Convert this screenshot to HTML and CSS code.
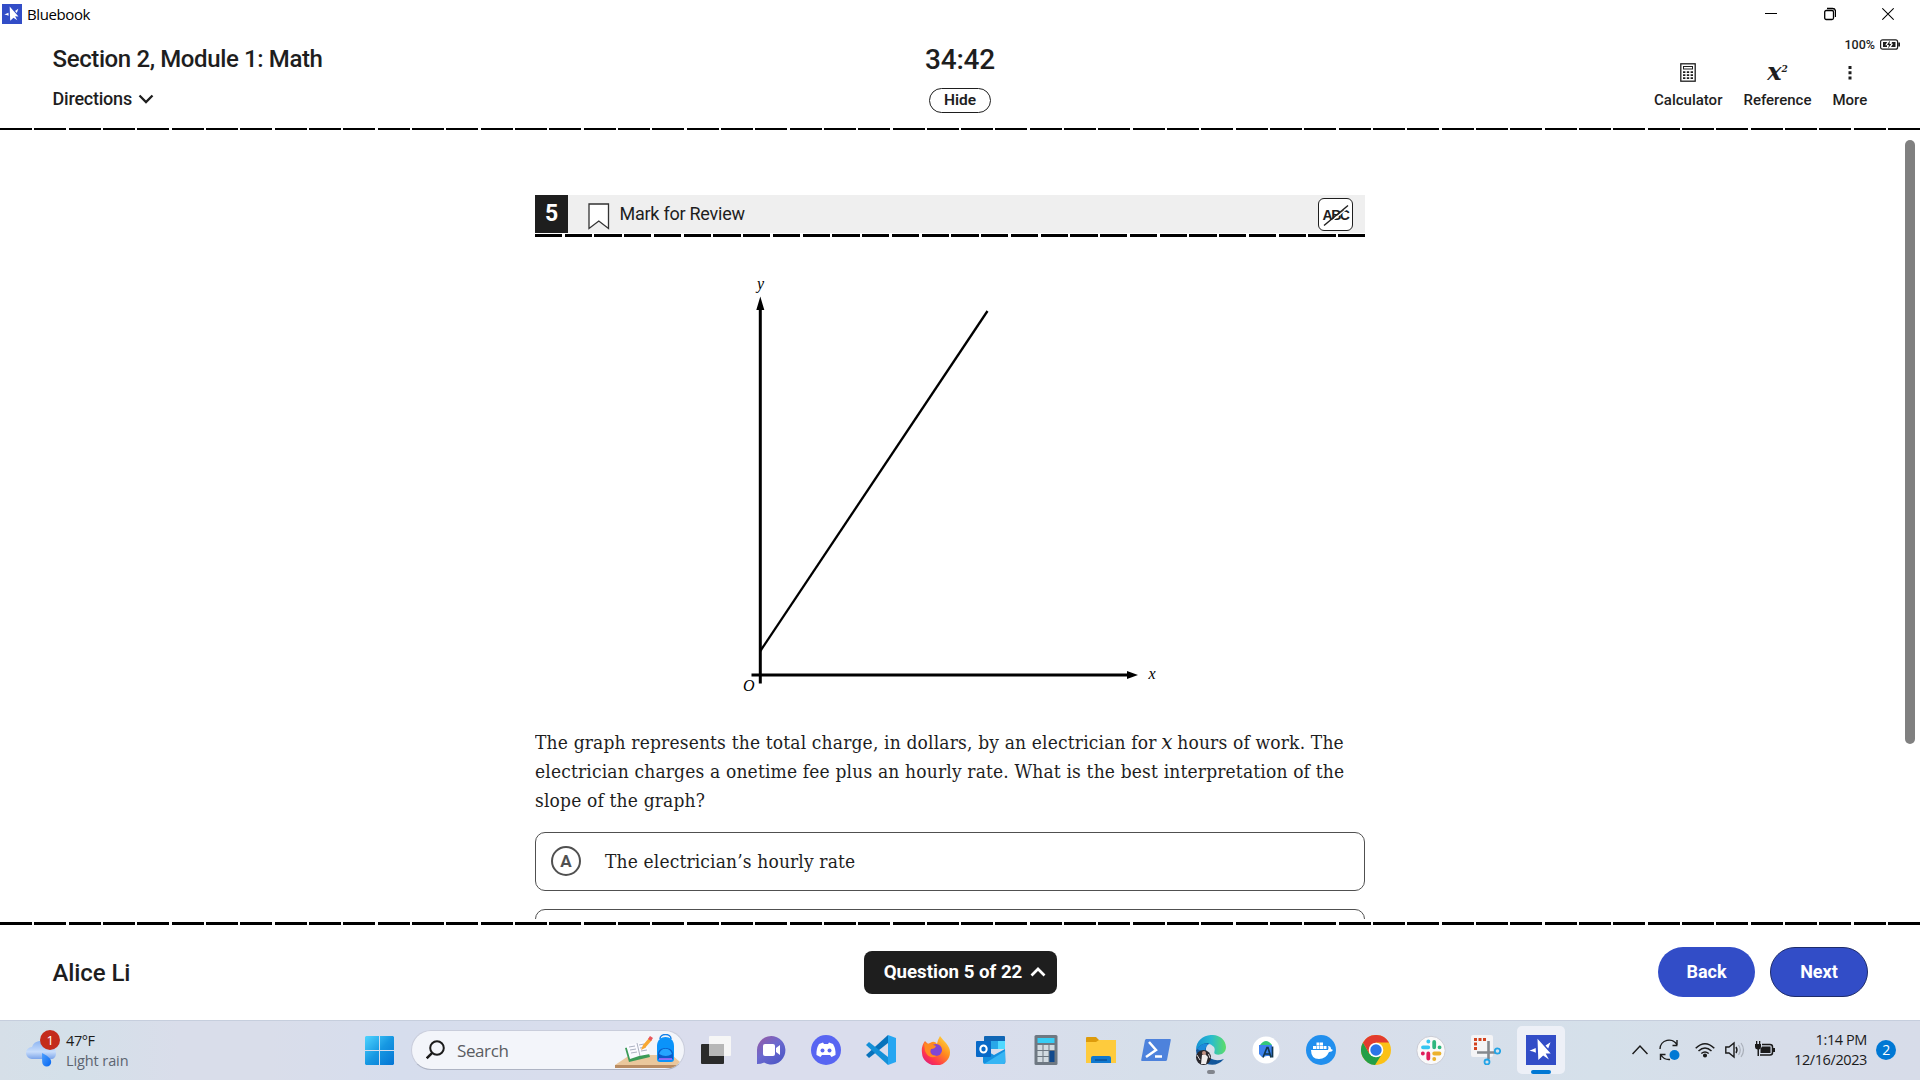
FILE: index.html
```html
<!DOCTYPE html>
<html lang="en">
<head>
<meta charset="utf-8">
<title>Bluebook</title>
<link rel="stylesheet" href="styles.css">
</head>
<body>
<svg class="defs" width="0" height="0" aria-hidden="true">
  <symbol id="bluebook" viewBox="0 0 30 30"><rect width="30" height="30" fill="#324dc7"/><path d="M11.500 3.800L24.700 18.600l-5-.2 3.200 6.100-5.700-4L12.300 25z" fill="#fff"/><path d="M3.500 15.800L9.700 13l.2 4.800-3-1.300zM24.500 7.200l-2.300 6.300-2.700-3z" fill="#fff"/></symbol>
</svg>

<header class="titlebar">
  <svg class="app-logo" viewBox="0 0 30 30"><use href="#bluebook"/></svg>
  <span class="app-name">Bluebook</span>
  <div class="window-controls">
    <svg width="12" height="14" viewBox="0 0 12 14"><path d="M0 6.500h12" stroke="#000"/></svg>
    <svg width="12" height="14" viewBox="0 0 12 14" fill="none" stroke="#000" stroke-width="1.300"><rect x=".7" y="3.500" width="8.800" height="9" rx="1.500"/><path d="M3 1.500h5.500a3 3 0 0 1 3 3V10"/></svg>
    <svg width="12" height="14" viewBox="0 0 12 14"><path d="M.3 1.300l11.400 11.400M11.700 1.300L.3 12.700" stroke="#000" stroke-width="1.200"/></svg>
  </div>
</header>

<section class="exam-header">
  <div class="section-info">
    <h1>Section 2, Module 1: Math</h1>
    <button class="directions">Directions <svg width="16" height="10" viewBox="0 0 16 10"><path d="M1.500 1.500L8 8l6.500-6.500" fill="none" stroke="#1e1e1e" stroke-width="2.300"/></svg></button>
  </div>
  <div class="timer">
    <div class="time">34:42</div>
    <button class="hide">Hide</button>
  </div>
  <div class="side">
    <div class="battery">100%
      <svg width="20" height="11" viewBox="0 0 20 11"><rect x=".6" y=".8" width="17" height="9.400" rx="2" fill="none" stroke="#1e1e1e" stroke-width="1.200"/><path d="M18.200 3.500h1.800v4h-1.800z" fill="#1e1e1e"/><path d="M3 3h4.200L5.200 6.200H7V8H3zM12 3h3.500v5h-4.500l2-3.200h-1.500z" fill="#1e1e1e"/><path d="M9.800 1.500L7 6h1.900L8.200 9.500 11.300 5H9.500z" fill="#1e1e1e"/></svg>
    </div>
    <nav class="tools">
      <div class="tool"><svg width="16" height="19" viewBox="0 0 16 19"><rect x=".8" y=".8" width="14.400" height="17.400" fill="none" stroke="#1e1e1e" stroke-width="1.300"/><rect x="3.500" y="3.500" width="9" height="2.500" fill="none" stroke="#1e1e1e"/><path d="M3 9.200h10M3 12.200h10M3 15.200h10" stroke="#1e1e1e" stroke-width="1.700" stroke-dasharray="2.400 1.400"/></svg><span>Calculator</span></div>
      <div class="tool"><span class="formula">x<sup>2</sup></span><span>Reference</span></div>
      <div class="tool"><svg width="4" height="19" viewBox="0 0 4 19"><path d="M.5 3h3v3h-3zM.5 8.300h3v3h-3zM.5 13.500h3v3h-3z" fill="#1e1e1e"/></svg><span>More</span></div>
    </nav>
  </div>
</section>
<div class="dashes dashes-top"></div>

<main class="content">
  <article class="question">
    <div class="question-bar">
      <span class="number">5</span>
      <svg class="bookmark" width="22" height="27" viewBox="0 0 22 27"><path d="M1 1h19.500v24.500L10.800 18 1 25.500z" fill="#fff" stroke="#333" stroke-width="1.300"/></svg>
      <span class="mark">Mark for Review</span>
      <span class="eliminate"><b>ABC</b><svg width="35" height="33" viewBox="0 0 35 33"><path d="M6 27.500L30 8" stroke="#fff" stroke-width="1.500"/><path d="M5 26.500L29 6.500" stroke="#1e1e1e" stroke-width="1.400"/></svg></span>
    </div>
    <div class="dashes dashes-question"></div>
    <svg class="graph" width="830" height="475" viewBox="535 255 830 475">
      <g stroke="#000" fill="none">
        <path d="M760.300 306V683.500M751.500 675H1130" stroke-width="3"/>
        <path d="M760.300 651L987.500 311" stroke-width="2.300"/>
      </g>
      <path d="M760.300 296.500l4 13.500h-8zM1138 675l-11 4v-8z"/>
      <text x="757" y="289">y</text><text x="1148.500" y="679">x</text><text x="743" y="690.500">O</text>
    </svg>
    <p class="prompt">The graph represents the total charge, in dollars, by an electrician for <i>x</i> hours of work. The<br>electrician charges a onetime fee plus an hourly rate. What is the best interpretation of the<br>slope of the graph?</p>
    <div class="choice"><span class="letter">A</span><span class="answer">The electrician’s hourly rate</span></div>
    <div class="choice"></div>
  </article>
  <div class="scrollbar"></div>
</main>

<div class="dashes dashes-bottom"></div>
<footer class="exam-footer">
  <span class="student">Alice Li</span>
  <button class="navigator">Question 5 of 22 <svg width="16" height="11" viewBox="0 0 16 11"><path d="M1.500 9.500L8 3l6.500 6.500" fill="none" stroke="#fff" stroke-width="2.700"/></svg></button>
  <div class="paging"><button class="back">Back</button><button class="next">Next</button></div>
</footer>

<div class="taskbar">
  <div class="weather">
    <svg width="36" height="40" viewBox="0 0 36 40">
      <defs><linearGradient id="cloud" x2="0" y2="1"><stop stop-color="#8db5f2"/><stop offset=".6" stop-color="#c8ddfb"/><stop offset="1" stop-color="#7ba4ea"/></linearGradient><linearGradient id="drop" x2="1" y2="1"><stop stop-color="#4fa0ff"/><stop offset="1" stop-color="#0566f0"/></linearGradient></defs>
      <path d="M6 29a6 6 0 0 1 0-12A9 9 0 0 1 22 15c5 1 8 4 8 8s-2 6-5 6z" fill="url(#cloud)"/>
      <path d="M16 23c0 2 0 4 .2 9a4.500 4.500 0 0 0 9 0c0-4-4-6-9.200-9z" fill="url(#drop)"/>
      <circle cx="24" cy="10" r="10" fill="#c42b1c"/><text class="alert" x="24" y="15">1</text>
    </svg>
    <div class="forecast"><span>47°F</span><span class="muted">Light rain</span></div>
  </div>
  <svg class="start" width="29" height="29" viewBox="0 0 29 29"><defs><linearGradient id="win" x2="1" y2="1"><stop stop-color="#4fd4ff"/><stop offset=".5" stop-color="#1798e2"/><stop offset="1" stop-color="#0474d4"/></linearGradient></defs><path d="M1 0h13v14H0V1zM15 0h13l1 1v13H15zM0 15h14v14H1l-1-1zM15 15h14v13l-1 1H15z" fill="url(#win)"/></svg>
  <div class="search">
    <svg width="20" height="20" viewBox="0 0 20 20"><circle cx="11" cy="8" r="6.800" fill="none" stroke="#1b1b1b" stroke-width="2"/><path d="M6.200 12.800L.7 18.300" stroke="#1b1b1b" stroke-width="2.500"/></svg>
    <span>Search</span>
    <svg class="school" width="66" height="35" viewBox="0 0 66 35">
      <path d="M0 31L15 21h42l8 7-4 6H0z" fill="#eac79c"/><path d="M0 31h62l-2 3H0z" fill="#b98c63"/>
      <path d="M10 14l4 14 21-5-4-14z" fill="#3b9b58"/><path d="M11 11l11-2 9-2 4 13-11 2-9 3z" fill="#fafaff"/><path d="M22 9l3 13M14 13l6-1M15 16l6-1M16 19l6-1M24 11l5-1M25 14l6-1M26 17l6-1" stroke="#aab0c0"/>
      <path d="M26 16l2-5 6-7 3 2-7 8z" fill="#f8a832"/><path d="M33 5l2-3 3 2-2 3z" fill="#e9565b"/>
      <path d="M45 5c0-6 11-6 11 0" fill="none" stroke="#1581e8" stroke-width="1.500"/><path d="M42 25V12c0-12 17-12 17 0v13q0 3-3 3H45q-3 0-3-3z" fill="#0a93fa"/><path d="M43 20c0-8 15-8 15 0v5H43z" fill="#095cca"/><path d="M44 20c2-7 11-7 13 0q-6 4-13 0z" fill="#25a5ff"/><path d="M44 25h13" stroke="#b66aff" stroke-width="1.500"/>
    </svg>
  </div>
  <div class="apps">
    <span class="app"><svg viewBox="0 0 30 30"><rect x="0" y="9" width="23" height="20" rx="1" fill="#2b2b2b"/><rect x="8" y="1" width="22" height="20" rx="1" fill="#f6f6f6"/><path d="M8 9h15v12H8z" fill="#b7b7b7"/></svg></span>
    <span class="app"><svg viewBox="0 0 30 30"><defs><linearGradient id="chat" x2=".8" y2="1"><stop stop-color="#9a58a0"/><stop offset=".5" stop-color="#6b69cf"/><stop offset="1" stop-color="#4c56c5"/></linearGradient></defs><path d="M1 29V15A14.200 14.200 0 1 1 8 27.500Q5 29 1 29z" fill="url(#chat)"/><rect x="7" y="9" width="12" height="12" rx="2" fill="#fff"/><path d="M20 13l4-3v10l-4-3z" fill="#fff"/></svg></span>
    <span class="app"><svg viewBox="0 0 30 30"><circle cx="15" cy="15" r="15" fill="#5865f2"/><path d="M8 9l4-1.500 1 1.500h4l1-1.500L22 9q3 5 2.500 11l-4 2-1.500-2h-8l-1.500 2-4-2Q5 14 8 9z" fill="#fff"/><circle cx="11.500" cy="15.500" r="2" fill="#5865f2"/><circle cx="18.500" cy="15.500" r="2" fill="#5865f2"/></svg></span>
    <span class="app"><svg viewBox="0 0 30 30"><path d="M22 0l8 3v24l-8 3z" fill="#26a6f2"/><path d="M22 0v8L3 23l-3-3z" fill="#0872bb"/><path d="M3 7l19 15v8L0 10z" fill="#1490d8"/></svg></span>
    <span class="app"><svg viewBox="0 0 30 30"><defs><linearGradient id="fox" x1="1" x2=".2" y2="1"><stop stop-color="#ffe94a"/><stop offset=".45" stop-color="#ff8d1d"/><stop offset=".8" stop-color="#ff3350"/><stop offset="1" stop-color="#d81e80"/></linearGradient></defs><path d="M4 6l3 3 4-2q3-1 5 2 1-5 3-8 3 4 6 7 4 5 4 9a14 13 0 0 1-28 1Q0 11 4 6z" fill="url(#fox)"/><circle cx="15" cy="15" r="6" fill="#8046d5"/><path d="M3 8q4 1 7 1l5 2q-1 3-5 3-3 6 6 7-8 4-12-5z" fill="#ff8a22"/></svg></span>
    <span class="app"><svg viewBox="0 0 30 30"><path d="M8 2q0-1 1-1h19q1 0 1 1v12H8z" fill="#1066b5"/><path d="M8 6h7v8H8z" fill="#1480ce"/><path d="M15 6h7v8h-7z" fill="#29a7e8"/><path d="M22 6h7v8h-7z" fill="#50d9ff"/><path d="M7 14l11 6 11-6 .5 13q0 2-2 2H9q-2 0-2-2z" fill="#1490df"/><path d="M8 29l21-13v11q0 2-2 2z" fill="#36b5f4"/><rect y="6" width="15" height="16" rx="1" fill="#0869c8"/><ellipse cx="7.500" cy="14" rx="3.200" ry="3.600" fill="none" stroke="#fff" stroke-width="2"/></svg></span>
    <span class="app"><svg viewBox="0 0 30 30"><rect x="3.500" width="23" height="30" rx="1.500" fill="#6e7882"/><path d="M6.500 3h17v5h-17z" fill="#36cdf5"/><path d="M6.500 10h5v5h-5zM12.500 10h5v5h-5zM18.500 10h5v5h-5zM6.500 16h5v5h-5zM12.500 16h5v5h-5zM6.500 22h5v5h-5zM12.500 22h5v5h-5z" fill="#d2dbe1"/><path d="M18.500 16h5v11h-5z" fill="#124a8d"/></svg></span>
    <span class="app"><svg viewBox="0 0 30 30"><path d="M0 3q0-1 1-1h9l3 3h17v5H0z" fill="#dd9b0c"/><path d="M0 7h10l3-2h17v23H0z" fill="#fecb3d"/><path d="M5 28v-5q0-2 2-2h16q2 0 2 2v5z" fill="#1079cf"/><path d="M9 25h12" stroke="#063f7e"/></svg></span>
    <span class="app"><svg viewBox="0 0 30 30"><path d="M5 4h24q1 0 .8 1L26 25q-.3 1-1.500 1H1q-1 0-.8-1L4 5z" fill="#4d82dc"/><path d="M8 7l7 8-10 7M14 21.500h7" fill="none" stroke="#fff" stroke-width="2.500"/></svg></span>
    <span class="app running"><svg viewBox="0 0 30 30"><defs><linearGradient id="edge"><stop stop-color="#1593d5"/><stop offset=".5" stop-color="#28bbd0"/><stop offset="1" stop-color="#5ddd66"/></linearGradient></defs><path d="M0 15C0-4 29-5 30 12c0 7-7 9-11 7-2-2 1-3-1-7Q11 4 0 15z" fill="url(#edge)"/><path d="M0 15Q6 7 13 8 8 12 11 19q5 9 17 5-7 8-17 5Q0 26 0 15z" fill="#12569b"/><path d="M1 14q6-7 12-5-5 3-3 9z" fill="#1c8bdb"/><circle cx="7.500" cy="22.500" r="7.500" fill="#29272c"/><path d="M5 29l1-9 3-1 3 3-2 7z" fill="#f0eded"/><circle cx="8" cy="18" r="2" fill="#c29384"/><path d="M1 20l3 5M12.500 19l1.500 4" stroke="#d9d1d4"/></svg></span>
    <span class="app"><svg viewBox="0 0 30 30"><circle cx="15" cy="15" r="13.500" fill="#fff"/><path d="M9 10q6-8 12 0z" fill="#33c77a"/><path d="M8 10h13v11h-5l-5 1-3-3z" fill="#3c82ed"/><path d="M12 22.500l4-10h1l3 10M14 19h5M21.500 11.500v11" fill="none" stroke="#12374e" stroke-width="1.700"/></svg></span>
    <span class="app"><svg viewBox="0 0 30 30"><circle cx="15" cy="15" r="15" fill="#218fee"/><path d="M5 15h17q1-2 0-4 3 0 3 3l2 1q-1 2-4 2-3 7-10 7-8 0-8-9z" fill="#fff"/><path d="M7 11h3v3H7zM10.500 11h3v3h-3zM14 11h3v3h-3zM17.500 11h3v3h-3zM10.500 7.500h3v3h-3zM14 7.500h3v3h-3z" fill="#fff"/></svg></span>
    <span class="app"><svg viewBox="0 0 30 30"><circle cx="15" cy="15" r="15" fill="#fbc116"/><path d="M2 7.500L8.500 19 15 22l-1 8A15 15 0 0 1 2 7.500z" fill="#239f48"/><path d="M14 30l7-11-6 3-5-2z" fill="#239f48"/><path d="M2 7.500a15 15 0 0 1 26 0H15L8 18z" fill="#e33b2e"/><circle cx="15" cy="15" r="7.300" fill="#fff"/><circle cx="15" cy="15" r="5.700" fill="#2b75e8"/></svg></span>
    <span class="app"><svg viewBox="0 0 30 30"><circle cx="15" cy="15.500" r="14.200" fill="#fafafa" stroke="#c9cbd5"/><g stroke-width="3.800" stroke-linecap="round"><path d="M12.300 6.500h.1M12.300 12.300H7" stroke="#36c5f0"/><path d="M18.200 7v5.300M23.500 12.300h.1" stroke="#2eb67d"/><path d="M12.300 18.500v5M6.800 18.500h.1" stroke="#e01e5a"/><path d="M18.200 18.500h5.300M18.200 24h.1" stroke="#ecb22e"/></g></svg></span>
    <span class="app"><svg viewBox="0 0 30 30"><rect width="22" height="22" rx="2" fill="#f4f4f6"/><path d="M15 4.500H4.500V15" fill="none" stroke="#d3421e" stroke-width="3" stroke-dasharray="3 1.500"/><path d="M17.500 6v18M6 17.500h18" stroke="#85898e" stroke-width="2.600"/><circle cx="26.500" cy="16" r="2.700" fill="none" stroke="#23a4e6" stroke-width="1.800"/><circle cx="16" cy="27" r="2.500" fill="none" stroke="#23a4e6" stroke-width="1.800"/></svg></span>
    <span class="app active"><svg viewBox="0 0 30 30"><use href="#bluebook"/></svg></span>
  </div>
  <div class="tray">
    <svg width="16" height="20" viewBox="0 0 16 20"><path d="M.5 14L8 6l7.500 8" fill="none" stroke="#1b1b1b" stroke-width="1.500"/></svg>
    <svg width="21" height="22" viewBox="0 0 21 22"><path d="M1 10a9 9 0 0 1 17-4V1M18.500 6.500h-5M1.500 21v-5.500h5M2 16q3 5 9 4.500" fill="none" stroke="#1b1b1b" stroke-width="1.400"/><circle cx="15.500" cy="16" r="5" fill="#0078d4"/></svg>
    <svg width="20" height="20" viewBox="0 0 20 20" fill="none" stroke="#1b1b1b" stroke-width="1.500"><path d="M.7 8.200q9.300-9 18.600 0M3.500 11q6.500-6 13 0M6.300 13.500q3.700-3 7.400 0"/><circle cx="10" cy="15.500" r="1.300" fill="#1b1b1b"/></svg>
    <svg width="20" height="20" viewBox="0 0 20 20" fill="none"><path d="M.8 7H4l5-4v14l-5-4H.8z" stroke="#1b1b1b" stroke-width="1.400"/><path d="M11 7q2 3 0 6" stroke="#1b1b1b" stroke-width="1.400"/><path d="M13.500 5q3.500 5 0 10M16 3q5 7 0 14" stroke="#a9afb9" stroke-width="1.200"/></svg>
    <svg width="20" height="20" viewBox="0 0 20 20"><path d="M7 4.500h8q2.500 0 2.500 2.500v5.500Q17.500 15 15 15H5" fill="none" stroke="#1b1b1b" stroke-width="1.500"/><path d="M7 6.500h8.500v6.500H5.500V9zM18 8h2v4h-2zM0 4h6v3q0 2-2 2.500V16H2.500V9.500Q0 9 0 7zM1 1h1.300v3H1zM4 1h1.300v3H4z" fill="#1b1b1b"/></svg>
    <div class="clock"><span>1:14 PM</span><span>12/16/2023</span></div>
    <span class="count">2</span>
  </div>
</div>
</body>
</html>
```
FILE: styles.css
```css
* { box-sizing: border-box; }
body {
  margin: 0;
  width: 1920px;
  height: 1080px;
  overflow: hidden;
  display: flex;
  flex-direction: column;
  background: #fff;
  color: #1e1e1e;
  font-family: Roboto, sans-serif;
}
button { font: inherit; color: inherit; background: none; border: 0; padding: 0; }
svg { display: block; flex: none; }
.defs { position: absolute; }

.titlebar {
  height: 28px;
  flex: none;
  display: flex;
  align-items: center;
  padding: 0 26px 0 2px;
  font: 15px/28px "Open Sans", sans-serif;
  color: #000;
}
.app-logo { width: 20px; height: 20px; }
.app-name { margin-left: 5px; letter-spacing: -.4px; }
.window-controls { margin-left: auto; display: flex; gap: 46.500px; }

.exam-header {
  height: 100px;
  flex: none;
  display: grid;
  grid-template-columns: 1fr 140px 1fr;
  padding: 0 20px 0 53px;
}
.section-info { padding-top: 16px; margin-left: -.5px; }
h1 { margin: 0; font-size: 24px; font-weight: 500; line-height: 30px; letter-spacing: -.38px; }
.directions { display: flex; align-items: center; gap: 6px; margin-top: 14px; font-size: 18px; font-weight: 500; line-height: 22px; letter-spacing: -.22px; }
.timer { display: flex; flex-direction: column; align-items: center; padding-top: 15px; margin-left: -16.500px; margin-right: 16.500px; }
.time { font-size: 28px; line-height: 34px; font-weight: 500; letter-spacing: -.2px; }
.hide { margin-top: 11px; width: 62px; height: 25px; border: 1px solid #1e1e1e; border-radius: 13px; font-size: 15.500px; font-weight: 600; line-height: 21px; padding-bottom: 1px; }
.side { display: flex; flex-direction: column; align-items: flex-end; }
.battery { display: flex; align-items: center; gap: 5px; height: 16px; margin-top: 8px; font-size: 12.500px; font-weight: 500; }
.tools { display: flex; gap: 21px; margin: 10px 32.700px 0 0; }
.tool { display: flex; flex-direction: column; align-items: center; font-size: 15px; font-weight: 500; line-height: 20px; }
.tool > svg, .formula { height: 19px; margin-top: 1px; margin-bottom: 8px; }
.formula { font: italic bold 24px/17px "DejaVu Serif", serif; }
.formula sup { font-size: 9px; line-height: 0; vertical-align: 8px; }

.dashes {
  --period: 34.327px;
  --dash: 32px;
  flex: none;
  background: repeating-linear-gradient(90deg, #000 0 var(--dash), transparent var(--dash) var(--period));
}
.dashes-top { height: 2px; }
.dashes-bottom { height: 3px; }
.dashes-question { --period: 29.750px; --dash: 27.200px; height: 3px; margin-top: 1px; }

.content {
  height: 792px;
  flex: none;
  display: flex;
  justify-content: space-between;
  padding: 10px 5px 0 535px;
}
.question { width: 830px; height: 779px; padding-top: 55px; overflow: hidden; }
.question-bar { height: 38px; display: flex; align-items: center; background: #efefef; padding-right: 12px; }
.number { width: 33px; height: 38px; background: #1e1e1e; color: #fff; font-size: 23px; font-weight: 700; line-height: 37.500px; text-align: center; }
.bookmark { margin: 4px 0 0 20px; }
.mark { margin: -1px 0 0 9.500px; font-size: 18px; letter-spacing: -.25px; }
.eliminate { margin-left: auto; width: 35px; height: 33px; display: grid; place-items: center; border: 1px solid #1e1e1e; border-radius: 6px; background: #fff; }
.eliminate > * { grid-area: 1 / 1; }
.eliminate b { font: bold 14px/20px "Liberation Sans", sans-serif; letter-spacing: -1.500px; margin: -1px 2px 0 0; }
.graph { margin-top: 18px; }
.graph text { font: italic 16px "Liberation Serif", serif; }
.prompt { margin: -2px 0 0; font: 19px/29px "DejaVu Serif Condensed", "DejaVu Serif", serif; letter-spacing: .17px; white-space: nowrap; }
.prompt i { margin: 0 -1px 0 -1px; font-family: "DejaVu Serif", serif; font-size: 20px; line-height: 0; }
.choice { height: 59px; margin-top: 16.500px; border: 1px solid #505050; border-radius: 10px; display: flex; align-items: center; padding-left: 15px; }
.choice + .choice { margin-top: 18px; }
.letter { width: 30px; height: 30px; border: 2px solid #505050; border-radius: 50%; color: #505050; font-size: 17px; font-weight: 700; line-height: 27px; text-align: center; }
.answer { margin-left: 24px; font: 19px/29px "DejaVu Serif Condensed", "DejaVu Serif", serif; letter-spacing: .15px; }
.scrollbar { width: 10px; height: 604px; border-radius: 5px; background: #808080; }

.exam-footer { height: 95px; flex: none; display: grid; grid-template-columns: 1fr 193px 1fr; align-items: center; padding: 0 52px 2px 53px; }
.student { margin: 2px 0 0 -.5px; font-size: 24px; font-weight: 500; letter-spacing: -.1px; }
.navigator { width: 193px; height: 43px; margin-top: 1px; padding: 0 0 1px 9px; display: flex; align-items: center; justify-content: center; gap: 8px; border-radius: 8px; background: #1e1e1e; color: #fff; font-size: 18.700px; font-weight: 700; }
.paging { display: flex; justify-content: flex-end; gap: 15px; }
.paging button { width: 98px; height: 50px; border-radius: 25px; background: #324dc7; color: #fff; font-size: 18px; font-weight: 700; }
.paging .back { width: 97px; }
.paging .next { border: 1px solid #1e2c6b; }

.taskbar {
  height: 60px;
  flex: none;
  display: flex;
  align-items: center;
  padding-bottom: 1px;
  border-top: 1px solid #c6cedd;
  background: linear-gradient(90deg, #d6dfe8 0, #d4e0e9 70px, #d9ddea 180px, #d9ddea 270px, #d6dded 400px, #dadded 700px, #dadded 930px, #d6dfea 1150px, #d8deeb 1330px, #d5e0ea 1600px, #d7dde9 1780px, #d7dce9 1920px);
  font-family: "Open Sans", sans-serif;
  font-size: 14.500px;
  letter-spacing: -.4px;
}
.weather { width: 339px; margin-left: 26px; display: flex; align-items: center; gap: 4px; }
.alert { fill: #fff; font-size: 13px; text-anchor: middle; }
.forecast { display: flex; flex-direction: column; padding-top: 1px; line-height: 20px; color: #1b1b1b; }
.muted { color: #5c6470; letter-spacing: -.1px; }
.search { width: 274px; height: 40px; margin-left: 17px; display: flex; align-items: center; padding-left: 14px; border: 1px solid #c9cddb; border-bottom-color: #aeb4c4; border-radius: 20px; background: #f3f5fa; overflow: hidden; font-size: 17px; color: #5a5c61; }
.search span { margin-left: 11px; }
.school { margin: 3px 3px 0 auto; }
.apps { display: flex; margin-left: 3px; }
.app { width: 55.050px; height: 48px; display: grid; place-items: center; position: relative; }
.app svg { width: 30px; height: 30px; }
.app.active { width: 48px; margin-left: 3px; border-radius: 5px; background: #edf0f7; }
.running::after, .active::after { content: ""; position: absolute; bottom: 0; width: 8px; height: 4px; border-radius: 2px; background: #81858d; }
.active::after { width: 20px; background: #0078d4; }
.tray { margin-left: auto; padding-right: 24px; display: flex; align-items: center; }
.tray svg:nth-child(2) { margin-left: 11px; }
.tray svg:nth-child(3) { margin-left: 15px; }
.tray svg:nth-child(4) { margin-left: 10px; }
.tray svg:nth-child(5) { margin-left: 10px; }
.clock { width: 92px; display: flex; flex-direction: column; align-items: flex-end; line-height: 20px; color: #1b1b1b; }
.count { margin-left: 9px; width: 20px; height: 20px; border-radius: 50%; background: #0078d4; color: #fff; font-size: 14px; line-height: 20px; text-align: center; }
```
